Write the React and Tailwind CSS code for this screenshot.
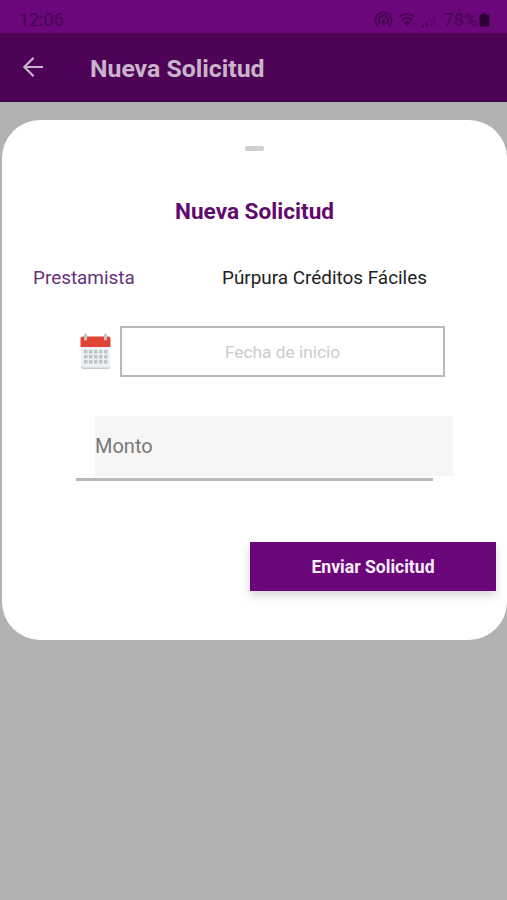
import React, { useState } from "react";

const StatusIcons = () => (
  <svg className="h-5 w-[64px]" viewBox="0 0 64 20" fill="none" stroke="#430650" strokeWidth="1.8">
    {/* hotspot */}
    <path d="M4.5 16.7a8 8 0 1 1 10 0" />
    <path d="M6.3 14a4.8 4.8 0 1 1 6.4 0" />
    <path d="M9.5 10.5v4" strokeWidth="2.6" strokeLinecap="round" />
    {/* wifi */}
    <path d="M25.5 6.8c4.4-3.6 10.4-3.6 14.8 0" />
    <path d="M28 10c3-2.5 7-2.5 10 0" />
    <path d="M30.5 12.7c1.6-1.2 3.4-1.2 5 0L33 15.5z" fill="#430650" strokeWidth="1" />
    <path d="M38.5 13v3M41 12v3" strokeWidth="1" opacity="0.5" />
    {/* signal */}
    <path d="M49 17v-2M52.7 17v-5" strokeWidth="2" />
    <path d="M56.5 17V9M60.2 17V6" strokeWidth="2" opacity="0.35" />
  </svg>
);

const BatteryIcon = () => (
  <svg className="ml-[2px] h-[15px] w-[11px]" viewBox="0 0 11 15" fill="#2d0235">
    <path d="M3.5 0.5h4v2h-4z" opacity="0.5" />
    <rect x="0.5" y="2.5" width="10" height="12" rx="1.5" />
  </svg>
);

const BackArrow = () => (
  <svg className="h-[22px] w-[22px]" viewBox="0 0 22 22" fill="none" stroke="#c9b4cc" strokeWidth="2.2">
    <path d="M21 11H2.5M11.6 1.8L2.4 11l9.2 9.2" />
  </svg>
);

const CalendarIcon = () => (
  <svg className="h-[37px] w-[32px] shrink-0" viewBox="0 0 32 37">
    <rect x="1" y="12" width="29" height="24" rx="2.5" fill="#c5ccd0" />
    <rect x="1" y="10" width="29" height="24.5" rx="2" fill="#eef0f1" />
    <path d="M0.500 14V5.500a2 2 0 0 1 2-2h26a2 2 0 0 1 2 2V14z" fill="#df4537" />
    {[18.5, 23.5, 28.5].map((y) =>
      [5.5, 10.5, 15.5, 20.5, 25.5].map((x) => (
        <rect key={`${x}-${y}`} x={x - 1.5} y={y - 1.5} width="3.4" height="3.4" rx="0.5" fill="#bcc4cb" />
      ))
    )}
    <rect x="4" y="0.5" width="3" height="7" rx="1.5" fill="#c4c4c8" />
    <rect x="24" y="0.5" width="3" height="7" rx="1.5" fill="#c4c4c8" />
  </svg>
);

export default function App() {
  const [amount, setAmount] = useState("");
  const [startDate, setStartDate] = useState("");

  return (
    <div className="min-h-screen w-full overflow-hidden bg-[#b2b2b2] font-['Roboto',sans-serif]">
      {/* Status bar */}
      <div className="flex h-[33px] items-center bg-[#6c067b] pl-[19px] pr-[17px] pt-[6px] text-[#430650]">
        <span className="text-[18px] leading-5">12:06</span>
        <div className="ml-auto flex items-center">
          <StatusIcons />
          <span className="ml-[6px] text-[18px] leading-5">78%</span>
          <BatteryIcon />
        </div>
      </div>

      {/* App header */}
      <header className="flex h-[69px] items-center border-b border-[#3b0444] bg-[#4d0456] pl-[22px]">
        <button type="button" aria-label="Atrás">
          <BackArrow />
        </button>
        <h1 className="ml-[46px] pt-[3px] text-[24.8px] font-bold leading-8 text-[#c9b4cc]">Nueva Solicitud</h1>
      </header>

      {/* Bottom sheet */}
      <main className="ml-[2px] mt-[18px] flex h-[520px] flex-col rounded-[38px] bg-white">
        <div className="mt-[26px] h-[5px] w-[19px] self-center rounded-[2px] bg-[#d0d0d0]"></div>
        <h2 className="mt-[45px] text-center text-[22.6px] font-bold leading-8 text-[#5f0a6d]">
          Nueva Solicitud
        </h2>

        <div className="mt-[38px] flex h-6 items-center text-[18.9px]">
          <span className="w-[189px] pl-[31px] text-[#66307a]">Prestamista</span>
          <span className="pl-[31px] text-[#1e1e1e]">Púrpura Créditos Fáciles</span>
        </div>

        <div className="mt-[36px] flex items-center pl-[78px]">
          <CalendarIcon />
          <input
            type="text"
            value={startDate}
            onChange={(e) => setStartDate(e.target.value)}
            placeholder="Fecha de inicio"
            className="ml-[8px] h-[51px] w-[325px] border-2 border-[#b9b9b9] text-center text-[17.3px] outline-none placeholder:text-[#cbcbcb]"
          />
        </div>

        <div className="mt-[39px] pl-[74px]">
          <input
            type="text"
            value={amount}
            onChange={(e) => setAmount(e.target.value)}
            placeholder="Monto"
            className="ml-[19px] block h-[60px] w-[358px] bg-[#f7f6f4] text-[20px] outline-none placeholder:text-[#77787d]"
          />
          <div className="mt-[2px] h-[3px] w-[357px] bg-[#b9b7bb]"></div>
        </div>

        <button
          type="button"
          className="mr-[11px] mt-[61px] h-[49px] w-[246px] self-end bg-[#6a067a] pt-[2px] text-[17.6px] font-bold text-[#fbeefc] shadow-[0_5px_9px_rgba(0,0,0,0.16)]"
        >
          Enviar Solicitud
        </button>
      </main>
    </div>
  );
}
